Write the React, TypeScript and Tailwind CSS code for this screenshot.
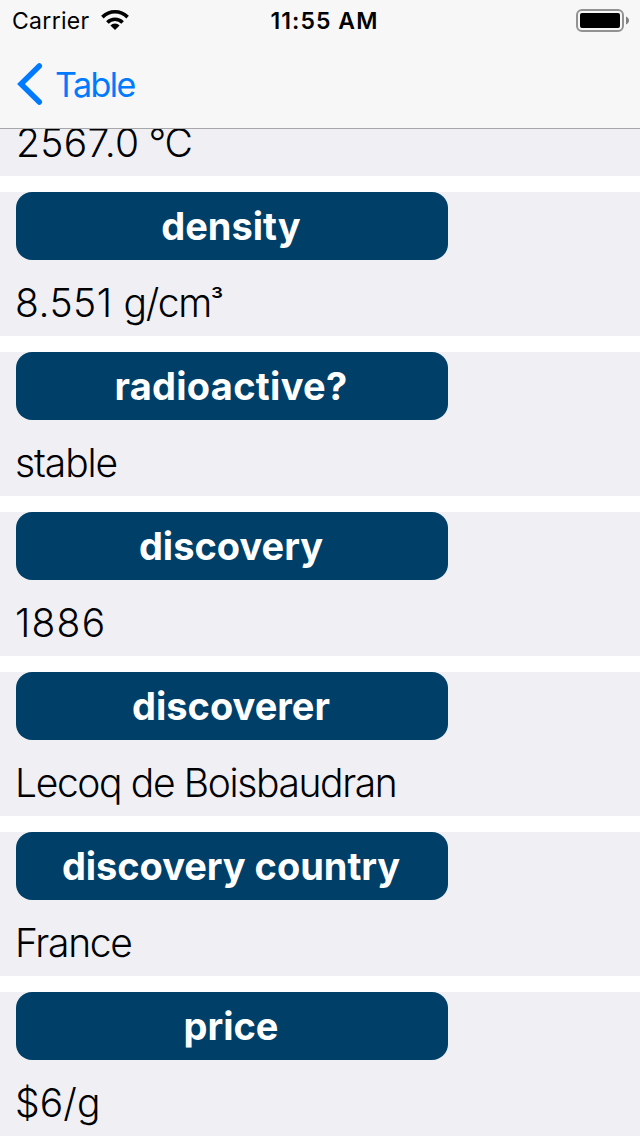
type Fact = {
  name: string;
  amount?: string;
  text: string;
  power?: string;
  nameClass: string;
  textClass: string;
};

const facts: Fact[] = [
  { name: 'density', amount: '8.551', text: 'g/cm', power: '³', nameClass: '', textClass: 'tracking-[-1.4px]' },
  { name: 'radioactive?', text: 'stable', nameClass: 'tracking-[0.3px]', textClass: 'tracking-[-1.1px]' },
  { name: 'discovery', text: '1886', nameClass: '', textClass: 'tracking-[1.2px]' },
  { name: 'discoverer', text: 'Lecoq de Boisbaudran', nameClass: '', textClass: 'tracking-[-1.37px]' },
  { name: 'discovery country', text: 'France', nameClass: 'tracking-[-0.05px]', textClass: 'tracking-[-1.3px]' },
  { name: 'price', text: '$6/g', nameClass: '', textClass: 'tracking-[0.1px]' },
];

export default function App() {
  return (
    <div className="flex h-[1136px] w-[640px] flex-col overflow-hidden bg-white font-['Inter',sans-serif] text-black">
      <header className="h-[129px] shrink-0 border-b border-[#a7a7aa] bg-[#f7f7f7]">
        <div className="grid h-10 grid-cols-3 items-center pl-3 pr-[11px]">
          <div className="flex items-center gap-[11px] text-[23px]">
            <span className="pt-0.5 tracking-[0.3px]">Carrier</span>
            <svg width="28" height="20" viewBox="0 0 28 20">
              <path d="M14 20l4.6-4.4q-1.8-2-4.6-2t-4.6 2z" />
              <path d="M6.4 12.4q3.2-3.2 7.6-3.2t7.6 3.2M1.4 7.1Q6.8 1.8 14 1.8T26.6 7.1" fill="none" stroke="black" strokeWidth="3.6" />
            </svg>
          </div>
          <span className="pt-0.5 pl-2 text-center text-[23px] font-semibold tracking-[1.05px] whitespace-nowrap">11:55 AM</span>
          <svg className="justify-self-end" width="53" height="24" viewBox="0 0 53 24">
            <rect x="1" y="2" width="46" height="21" rx="5" fill="none" stroke="#929292" strokeWidth="2" />
            <rect x="4" y="5" width="40" height="15" rx="2" />
            <path d="M50 8.5v8c4-1.5 4-6.5 0-8" fill="#808080" />
          </svg>
        </div>
        <div className="flex h-[88px] items-center pl-4 text-[#007aff]">
          <svg width="28" height="44" viewBox="0 0 28 44" fill="none" stroke="currentColor" strokeWidth="5.5" strokeLinecap="round">
            <path d="M23.3 4L5 22l18.3 18" />
          </svg>
          <span className="pl-[11px] text-[34px] tracking-[-1.5px]">Table</span>
        </div>
      </header>
      <main className="flex flex-col gap-4">
        <section className="flex h-[47px] items-end bg-[#efeff4] px-4 pb-2 [clip-path:inset(0)]">
          <p className="flex gap-[9px] text-[39px] leading-[50px] font-light">
            <span className="tracking-[0.3px]">2567.0</span>
            <span className="tracking-[-1.2px]">°C</span>
          </p>
        </section>
        {facts.map((f) => (
          <section key={f.name} className="h-36 shrink-0 bg-[#efeff4] px-4">
            <h2 className="flex h-[68px] w-[432px] items-center justify-center rounded-2xl bg-[#004068] text-[38px] font-bold text-white">
              <span className={`pr-0.5 pt-px ${f.nameClass}`}>{f.name}</span>
            </h2>
            <p className="-ml-px flex pt-[18px] text-[39px] leading-[50px] font-light">
              {f.amount && <span className="mr-[11px] tracking-[0.5px]">{f.amount}</span>}
              <span className={f.textClass}>{f.text}</span>
              {f.power && <span className="text-[28px] leading-[46px] font-normal">{f.power}</span>}
            </p>
          </section>
        ))}
      </main>
    </div>
  );
}
